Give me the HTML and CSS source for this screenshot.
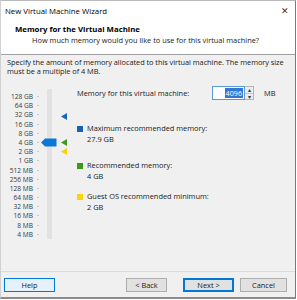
FILE: index.html
```html
<!DOCTYPE html>
<html>
<head>
<meta charset="utf-8">
<link rel="stylesheet" href="styles.css">
</head>
<body>
<div class="window">
  <div class="top">
    <div class="titlebar">
      <span class="title">New Virtual Machine Wizard</span>
      <span class="close">✕</span>
    </div>
    <div class="header">
      <div class="h1">Memory for the Virtual Machine</div>
      <div class="h2">How much memory would you like to use for this virtual machine?</div>
    </div>
  </div>
  <div class="body">
    <p class="desc">Specify the amount of memory allocated to this virtual machine. The memory size must be a multiple of 4 MB.</p>
    <div class="main">
      <div class="slider">
        <div class="labels">
          <span>128 GB</span><span>64 GB</span><span>32 GB</span><span>16 GB</span>
          <span>8 GB</span><span>4 GB</span><span>2 GB</span><span>1 GB</span>
          <span>512 MB</span><span>256 MB</span><span>128 MB</span><span>64 MB</span>
          <span>32 MB</span><span>16 MB</span><span>8 MB</span><span>4 MB</span>
        </div>
        <div class="ticks">
          <i></i><i></i><i></i><i></i><i></i><i></i><i></i><i></i>
          <i></i><i></i><i></i><i></i><i></i><i></i><i></i><i></i>
        </div>
        <div class="track"></div>
        <svg class="thumb" width="16" height="9" viewBox="0 0 16 9"><path d="M0 4.5 L4 0.5 H15.5 V8.5 H4 Z" fill="#0a78d7"/></svg>
        <svg class="mark mark-max" width="6" height="7" viewBox="0 0 6 7"><path d="M0 3.5 L6 0 V7 Z" fill="#1565c0"/></svg>
        <svg class="mark mark-rec" width="6" height="7" viewBox="0 0 6 7"><path d="M0 3.5 L6 0 V7 Z" fill="#3c9a1a"/></svg>
        <svg class="mark mark-min" width="6" height="7" viewBox="0 0 6 7"><path d="M0 3.5 L6 0 V7 Z" fill="#f5d40c"/></svg>
      </div>
      <div class="info">
        <div class="mem-row">
          <span class="mem-label">Memory for this virtual machine:</span>
          <span class="spin">
            <span class="field"><span class="sel">4096</span></span>
            <span class="arrows"><span class="up">▴</span><span class="dn">▾</span></span>
          </span>
          <span class="unit">MB</span>
        </div>
        <div class="legend l-max">
          <span class="sq blue"></span>
          <div><div>Maximum recommended memory:</div><div>27.9 GB</div></div>
        </div>
        <div class="legend l-rec">
          <span class="sq green"></span>
          <div><div>Recommended memory:</div><div>4 GB</div></div>
        </div>
        <div class="legend l-min">
          <span class="sq yellow"></span>
          <div><div>Guest OS recommended minimum:</div><div>2 GB</div></div>
        </div>
      </div>
    </div>
  </div>
  <div class="footer">
    <button class="btn btn-help">Help</button>
    <span class="spacer"></span>
    <button class="btn btn-back">&lt; Back</button>
    <button class="btn btn-next">Next &gt;</button>
    <button class="btn btn-cancel">Cancel</button>
  </div>
</div>
</body>
</html>
```
FILE: styles.css
```css
* { box-sizing: border-box; }
html, body { margin: 0; padding: 0; background: #ffffff; }
body {
  font-family: "Open Sans", "Liberation Sans", sans-serif;
  font-size: 7.4px;
  color: #1a1a1a;
}
.window {
  width: 296px;
  height: 299px;
  background: #f0f0f0;
  border-top: 1px solid #b9b9b9;
  border-left: 1px solid #d0d0d0;
  border-right: 1px solid #7a7a7a;
  border-bottom: 2px solid #8c8c8c;
  display: flex;
  flex-direction: column;
}
.top {
  background: #ffffff;
  height: 54px;
  border-bottom: 1px solid #a0a0a0;
}
.titlebar {
  display: flex;
  justify-content: space-between;
  align-items: center;
  height: 19px;
  padding: 0 6px 0 4px;
}
.title { font-size: 7.8px; color: #000; }
.close { font-size: 9px; color: #333; }
.header { padding: 3px 0 0 14px; }
.h1 { font-weight: 700; font-size: 7.8px; line-height: 12px; color: #000; }
.h2 { padding-left: 17px; line-height: 11px; color: #1a1a1a; }
.body { flex: 1; padding: 3px 6px 0 6px; }
.desc { margin: 0; line-height: 9px; letter-spacing: -0.05px; }
.main { display: flex; margin-top: 16px; }
.slider {
  position: relative;
  display: flex;
  width: 70px;
  height: 150px;
}
.labels {
  width: 26px;
  display: flex;
  flex-direction: column;
  align-items: flex-end;
  font-size: 6.6px;
  padding-top: 0px;
}
.labels span { height: 9.2px; line-height: 9.2px; color: #3a3a3a; }
.ticks {
  width: 10px;
  display: flex;
  flex-direction: column;
  align-items: center;
}
.ticks i { display: block; height: 9.2px; width: 2px; position: relative; }
.ticks i::after {
  content: "";
  position: absolute;
  left: 0; top: 4px;
  width: 2px; height: 1px;
  background: #c8c8c8;
}
.track {
  width: 5px;
  margin-left: 4px;
  margin-top: -3px;
  height: 150px;
  background: #e2e2e2;
  border-radius: 1px;
}
.thumb { position: absolute; left: 34px; top: 46px; }
.mark { position: absolute; left: 54px; }
.mark-max { top: 21px; }
.mark-rec { top: 47px; }
.mark-min { top: 56px; }
.info { flex: 1; padding-left: 0px; }
.mem-row {
  display: flex;
  align-items: center;
  height: 14px;
  margin-top: -6px;
}
.mem-label { width: 135px; }
.spin { display: flex; height: 14px; }
.field {
  width: 33px;
  height: 14px;
  background: #fff;
  border: 1px solid #5a9ad5;
  display: flex;
  justify-content: flex-end;
  align-items: center;
  padding-right: 1px;
}
.sel { background: #3378d6; color: #fff; padding: 0 1px; line-height: 10px; font-size: 7.2px; }
.arrows {
  width: 9px;
  display: flex;
  flex-direction: column;
  border: 1px solid #b5b5b5;
  border-left: none;
  background: #ececec;
}
.arrows span { flex: 1; font-size: 6px; line-height: 6px; text-align: center; color: #333; }
.up { border-bottom: 1px solid #c8c8c8; }
.unit { margin-left: 10px; }
.legend { display: flex; line-height: 11px; }
.legend .sq { width: 6px; height: 6px; margin: 2.5px 4px 0 0; flex: none; }
.l-max { margin-top: 23px; }
.l-rec { margin-top: 15px; }
.l-min { margin-top: 9px; }
.blue { background: #1a5fb0; }
.green { background: #3c9a1a; }
.yellow { background: #fad30a; }
.footer {
  height: 26px;
  border-top: 1px solid #dcdcdc;
  display: flex;
  align-items: center;
  padding: 0 8px 0 3px;
  gap: 6px;
}
.spacer { flex: 1; }
.btn {
  font-family: inherit;
  font-size: 7.4px;
  height: 14px;
  padding: 0;
  background: #e1e1e1;
  border: 1px solid #adadad;
  color: #1a1a1a;
}
.btn-help { width: 51px; background: #e5f1fb; border-color: #0078d7; }
.btn-back { width: 41px; margin-right: 10px; }
.btn-next { width: 51px; border: 2px solid #0078d7; }
.btn-cancel { width: 47px; }
```
